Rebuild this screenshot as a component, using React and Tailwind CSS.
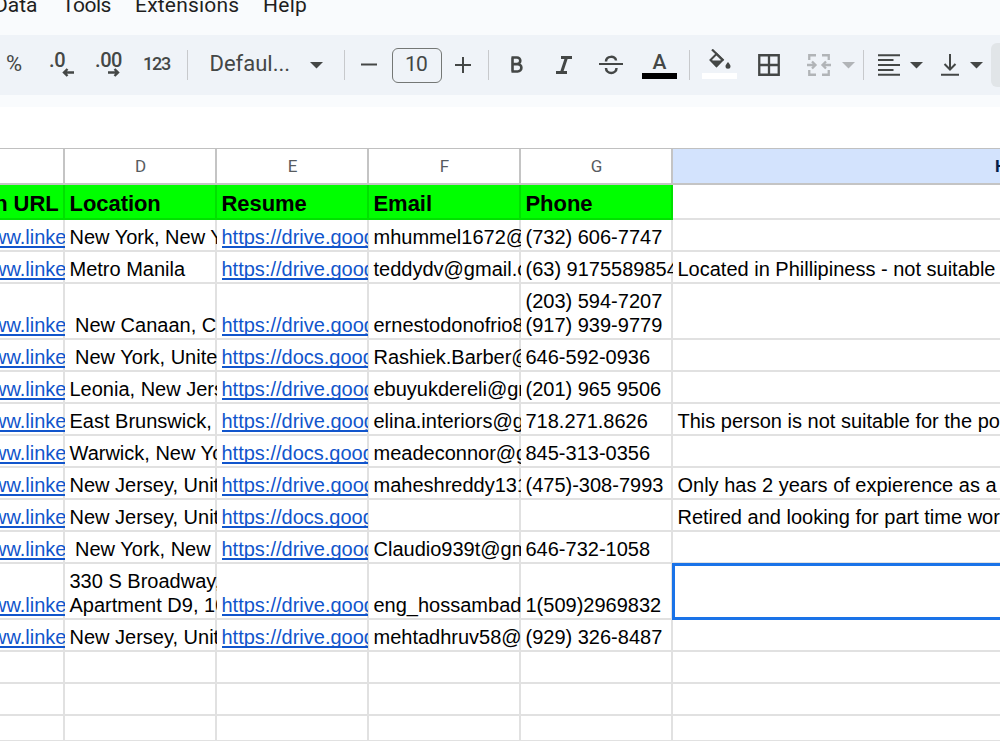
import React from 'react';

const COLS = ['C', 'D', 'E', 'F', 'G'];

const HEADINGS = ['LinkedIn URL', 'Location', 'Resume', 'Email', 'Phone'];

const DRIVE = 'https://drive.goog';
const DOCS = 'https://docs.goog';

const ROWS = [
  { location: 'New York, New Y', resume: DRIVE, email: 'mhummel1672@', phone: '(732) 606-7747' },
  { location: 'Metro Manila', resume: DRIVE, email: 'teddydv@gmail.c', phone: '(63) 9175589854', note: 'Located in Phillipiness - not suitable' },
  { location: ' New Canaan, C', resume: DRIVE, email: 'ernestodonofrio8', phone: '(203) 594-7207\n(917) 939-9779', tall: true },
  { location: ' New York, Unite', resume: DOCS, email: 'Rashiek.Barber@', phone: '646-592-0936' },
  { location: 'Leonia, New Jers', resume: DRIVE, email: 'ebuyukdereli@gm', phone: '(201) 965 9506' },
  { location: 'East Brunswick,', resume: DRIVE, email: 'elina.interiors@g', phone: '718.271.8626', note: 'This person is not suitable for the pos' },
  { location: 'Warwick, New Yo', resume: DOCS, email: 'meadeconnor@g', phone: '845-313-0356' },
  { location: 'New Jersey, Unit', resume: DRIVE, email: 'maheshreddy131', phone: '(475)-308-7993', note: 'Only has 2 years of expierence as a' },
  { location: 'New Jersey, Unit', resume: DOCS, email: '', phone: '', note: 'Retired and looking for part time work' },
  { location: ' New York, New', resume: DRIVE, email: 'Claudio939t@gm', phone: '646-732-1058' },
  { location: '330 S Broadway,\nApartment D9, 10', resume: DRIVE, email: 'eng_hossambad', phone: '1(509)2969832', tall: true, selected: true },
  { location: 'New Jersey, Unit', resume: DRIVE, email: 'mehtadhruv58@', phone: '(929) 326-8487' },
];

function Caret({ className = '' }) {
  return (
    <svg className={`shrink-0 ${className}`} width="13" height="7" viewBox="0 0 13 7" fill="currentColor">
      <path d="M0 0h13L6.5 6.5z" />
    </svg>
  );
}

function Divider({ className = '' }) {
  return <div className={`h-[30px] w-px shrink-0 bg-[#c7c9cc] ${className}`} />;
}

function Icon({ w, h, className = '', children }) {
  return (
    <svg className={`shrink-0 ${className}`} width={w} height={h} viewBox={`0 0 ${w} ${h}`} fill="none" stroke="currentColor" strokeWidth="2">
      {children}
    </svg>
  );
}

function MenuBar() {
  return (
    <nav className="h-[35px] flex items-start font-[Roboto,sans-serif] text-[21px] leading-6 text-[#1f1f1f] whitespace-nowrap">
      <span className="-mt-[7px] -ml-[6px] w-[68px] shrink-0">Data</span>
      <span className="-mt-[7px] w-[73px] shrink-0 tracking-[-0.5px]">Tools</span>
      <span className="-mt-[7px] w-[128px] shrink-0 tracking-[0.2px]">Extensions</span>
      <span className="-mt-[7px] tracking-[0.3px]">Help</span>
    </nav>
  );
}

function Toolbar() {
  return (
    <div className="h-[60px] flex items-center overflow-hidden bg-[#eff3f8] pl-[6px] font-[Roboto,sans-serif] text-[#444746] whitespace-nowrap">
      <span className="w-[43px] shrink-0 pb-[3px] text-[22px]">%</span>
      {/* decrease / increase decimals */}
      <div className="w-[46px] shrink-0 flex flex-col items-start pb-[2px]">
        <span className="text-[20px] leading-[16px] font-medium tracking-[-0.4px]">.0</span>
        <Icon w={12} h={9} className="ml-[13px]"><path d="M12 4.5H2M5.5 1L2 4.5 5.5 8" strokeWidth="2.4" /></Icon>
      </div>
      <div className="w-[48px] shrink-0 flex flex-col items-start pb-[2px]">
        <span className="text-[20px] leading-[16px] font-medium tracking-[-0.4px]">.00</span>
        <Icon w={12} h={9} className="ml-[13px]"><path d="M0 4.5H10M6.5 1L10 4.5 6.5 8" strokeWidth="2.4" /></Icon>
      </div>
      <span className="w-[44px] shrink-0 pb-[3px] text-[18px] font-medium tracking-[-1.2px]">123</span>
      <Divider />
      <span className="ml-[21.5px] w-[100.5px] shrink-0 pb-[3px] text-[22px]">Defaul...</span>
      <Caret />
      <Divider className="ml-[21px]" />
      <Icon w={16} h={16} className="ml-[16px]"><path d="M0 7.5h16" /></Icon>
      <div className="ml-[15px] h-[35px] w-[50px] shrink-0 flex items-center justify-center rounded-[6px] border border-[#747775] pr-[2px] pb-px text-[21px] tracking-[-0.9px]">10</div>
      <Icon w={16} h={16} className="ml-[13px]"><path d="M0 8h16M8 0v16" /></Icon>
      <Divider className="ml-[17px]" />
      <Icon w={14} h={18} className="ml-[21px]">
        <path d="M2.500 1.500v14M1.500 1.500h5.500a3.300 3.300 0 0 1 0 6.600H2.500h5.200a3.700 3.700 0 0 1 0 7.400H1.500" strokeWidth="2.600" />
      </Icon>
      <Icon w={16} h={18} className="ml-[32px]">
        <path d="M5 1.500h11M0 16.500h11M10.500 1.500l-5 15" strokeWidth="3" />
      </Icon>
      <Icon w={24} h={20} className="ml-[27px]">
        <path d="M0 9h24" />
        <path d="M7 6.5C7 .8 16.5.2 17 5.5M7 13c0 6.500 10.500 6.500 10.500 0" strokeWidth="2.500" />
      </Icon>
      <div className="ml-[19px] w-[35px] shrink-0 flex flex-col items-center pt-[1px]">
        <span className="pb-px text-[21px] leading-[20px] font-medium">A</span>
        <div className="h-[6px] w-full bg-black" />
      </div>
      <Divider className="ml-[12px]" />
      <div className="ml-[12px] w-[35px] shrink-0 flex flex-col items-center pb-[2px]">
        <Icon w={23} h={24}>
          <path d="M4 .5l11.500 11" strokeWidth="2.200" />
          <path d="M8.500 5L2.500 11 8.500 17 14.500 11z" />
          <path d="M2 11.500h13l-6.500 7z" fill="currentColor" stroke="none" />
          <path d="M20 13c1.500 2 2.500 3 2.500 4.300a2.500 2.500 0 0 1-5 0c0-1.300 1-2.300 2.500-4.300z" fill="currentColor" stroke="none" />
        </Icon>
        <div className="h-[6px] w-full bg-white" />
      </div>
      <Icon w={22} h={22} className="ml-[21px]"><path d="M1.250 1.250h19.500v19.500H1.250zM11 1v20M1 11h20" strokeWidth="2.300" /></Icon>
      <Icon w={24} h={22} className="ml-[27px] text-[#b1b4b7]">
        <path d="M9 1.250H2.250V6M15 1.250h6.750V6M9 20.750H2.250V16M15 20.750h6.750V16M0 11h8M5 7.500L8.500 11 5 14.500M24 11h-8M19 7.500L15.500 11 19 14.500" strokeWidth="2.300" />
      </Icon>
      <Caret className="ml-[11px] text-[#b1b4b7]" />
      <Divider className="ml-[8px]" />
      <Icon w={22} h={22} className="ml-[14px]"><path d="M0 1.250h22M0 6.100h15.500M0 11h22M0 15.900h15.500M0 20.750h22" /></Icon>
      <Caret className="ml-[10px]" />
      <Icon w={18} h={22} className="ml-[18px]"><path d="M9 0v15M3.500 10L9 15.500 14.500 10M0 20.700h18" /></Icon>
      <Caret className="ml-[11px]" />
      <div className="ml-[8px] h-[44px] w-[40px] shrink-0 rounded-[6px] bg-[#e1e5e8]" />
    </div>
  );
}

// Grid lines are inset shadows, so that clipped text runs over them.
function Cell({ value, link, last, className = '' }) {
  return (
    <div
      className={`flex items-end overflow-hidden pl-[4.5px] pb-[3px] whitespace-pre ${
        last ? 'flex-1 shadow-[inset_0_-2px_0_#e1e1e1]' : 'w-[152px] shrink-0 shadow-[inset_-2px_-2px_0_#e1e1e1]'
      } ${className}`}
    >
      {link ? (
        <a className="min-w-0 flex-1 overflow-hidden text-[#1155cc] underline decoration-2 underline-offset-[2px] [text-decoration-skip-ink:none]">
          {value}
        </a>
      ) : (
        <span>{value}</span>
      )}
    </div>
  );
}

function Sheet() {
  return (
    <div className="-ml-[87px] w-[1087px] overflow-hidden border-t border-[#c0c0c0] bg-white font-['Liberation_Sans',Arial,sans-serif] text-[20px] leading-6 text-black">
      <div className="h-9 flex font-[Roboto,sans-serif] text-[17px] text-[#575b5f]">
        {COLS.map((c) => (
          <div key={c} className="w-[152px] shrink-0 flex items-center justify-center border-r-2 border-b-2 border-[#c4c4c4] pl-px">
            {c === 'C' ? '' : c}
          </div>
        ))}
        <div className="w-[656px] shrink-0 flex items-center justify-center border-b-2 border-[#c4c4c4] bg-[#d3e3fd] font-bold text-[#041e49]">H</div>
      </div>

      <div className="h-[35px] flex text-[22px] font-bold tracking-[-0.05px]">
        {HEADINGS.map((h) => (
          <div key={h} className="w-[152px] shrink-0 flex items-end pb-[4px] pl-[4.5px] bg-[#00ff00] shadow-[inset_-2px_-2px_0_#00e100]">
            {h}
          </div>
        ))}
        <div className="flex-1 shadow-[inset_0_-2px_0_#e1e1e1]" />
      </div>

      {ROWS.map((row, i) => (
        <div key={i} className={`flex ${row.tall ? 'h-14' : 'h-8'}`}>
          <Cell value="https://www.linke" link />
          <Cell value={row.location} />
          <Cell value={row.resume} link className="pr-px" />
          <Cell value={row.email} />
          <Cell value={row.phone} />
          {row.selected ? (
            <div className="-mt-px -ml-px flex-1 border-y-[3px] border-l-[3px] border-[#1a73e8]" />
          ) : (
            <Cell value={row.note} last />
          )}
        </div>
      ))}

      {[0, 1].map((i) => (
        <div key={i} className="h-8 flex">
          {COLS.map((c) => <Cell key={c} />)}
          <Cell last />
        </div>
      ))}
      <div className="h-[25px] flex border-b border-[#e1e1e1]">
        {COLS.map((c) => (
          <div key={c} className="w-[152px] shrink-0 border-r-2 border-[#e1e1e1]" />
        ))}
      </div>
    </div>
  );
}

export default function App() {
  return (
    <div className="h-[750px] w-[1000px] overflow-hidden bg-[#f9fbfd]">
      <MenuBar />
      <Toolbar />
      <div className="h-[655px] overflow-hidden border-t-[12px] border-[#f9fbfd] bg-white pt-[41px]">
        <Sheet />
      </div>
    </div>
  );
}
